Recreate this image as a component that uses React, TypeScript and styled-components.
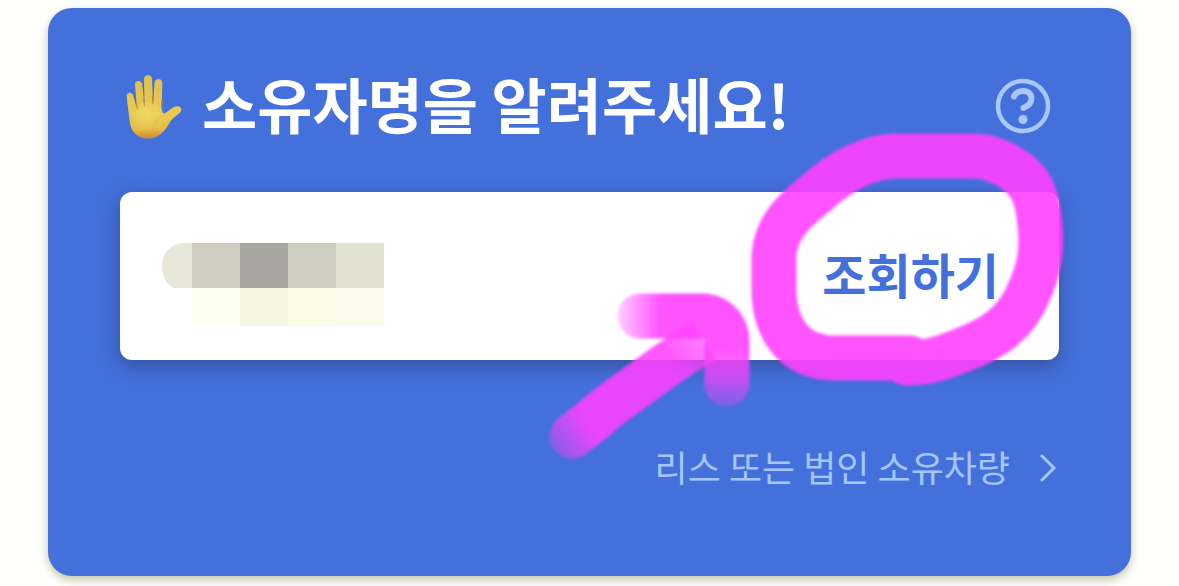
import React from "react";
import styled, { createGlobalStyle } from "styled-components";

const GlobalStyle = createGlobalStyle`
  *, *::before, *::after { box-sizing: border-box; }
  body {
    margin: 0;
    background: #fffffe;
    font-family: "Noto Sans CJK KR", "Noto Sans", sans-serif;
  }
`;

const Page = styled.main`
  padding: 8px 48px 10px;
  overflow: hidden;
`;

const Card = styled.form`
  position: relative;
  display: flex;
  flex-direction: column;
  padding: 60px 72px 82px;
  border-radius: 24px;
  background: #4470dc;
  box-shadow: 0 4px 10px rgba(110, 110, 40, 0.4);
`;

const Header = styled.header`
  display: flex;
  align-items: center;
  gap: 18px;
  height: 76px;
  margin-bottom: 48px;
`;

const Title = styled.h1`
  flex: 1;
  margin: 0;
  padding-bottom: 6px;
  color: #fff;
  font-size: 60px;
  font-weight: 700;
  line-height: 72px;
  white-space: nowrap;
`;

const HelpButton = styled.button`
  display: flex;
  margin-right: 8px;
  padding: 0;
  border: 0;
  background: none;
  cursor: pointer;
`;

const Field = styled.div`
  display: flex;
  align-items: center;
  height: 168px;
  padding: 0 60px 0 42px;
  border-radius: 12px;
  background: #fff;
  box-shadow: 0 6px 18px rgba(40, 50, 90, 0.5);
`;

const NameMask = styled.svg`
  flex: none;
  margin-top: 18px;
`;

const OwnerInput = styled.input`
  flex: 1;
  min-width: 0;
  height: 100%;
  border: 0;
  outline: 0;
  background: transparent;
  color: #333;
  font: inherit;
  font-size: 48px;
`;

const SearchButton = styled.button`
  padding: 0 0 6px;
  border: 0;
  background: none;
  color: #4470dc;
  font-family: inherit;
  font-size: 48px;
  font-weight: 700;
  line-height: 72px;
  white-space: nowrap;
  cursor: pointer;
`;

const LeaseLink = styled.a`
  display: flex;
  align-items: center;
  align-self: flex-end;
  gap: 28px;
  margin: 78px 1px 0 0;
  color: #a5c5fb;
  font-size: 36px;
  font-weight: 400;
  line-height: 56px;
  text-decoration: none;
  white-space: nowrap;
`;

const Chevron = styled.svg`
  flex: none;
  margin-top: 4px;
`;

const Marker = styled.svg`
  position: absolute;
  top: 112px;
  right: 51px;
  pointer-events: none;
`;

function Hand() {
  return (
    <svg width="64" height="72" viewBox="0 0 64 72" aria-hidden="true">
      <defs>
        <linearGradient id="skin" x1="0" y1="0" x2="0" y2="1">
          <stop offset="0" stopColor="#e0be4c" />
          <stop offset="0.6" stopColor="#e8ca52" />
          <stop offset="0.85" stopColor="#e7bd48" />
          <stop offset="1" stopColor="#cc8733" />
        </linearGradient>
        <radialGradient id="palm" cx="0.5" cy="0.4" r="0.5">
          <stop offset="0" stopColor="#efdb68" stopOpacity="0.8" />
          <stop offset="1" stopColor="#efdb68" stopOpacity="0" />
        </radialGradient>
      </defs>
      <path
        fill="url(#skin)"
        d="M6.700 27C6 21.500 13 21.500 13.500 26.500L17 38.500L15 15C14.700 9.500 22 9.500 22.300 15L24.500 35L24 9C24 3.500 32 3.500 32 9L33 34L34.500 13C34.700 7.500 42.300 7.500 42.300 13L41.700 38C41.800 43 43 44.500 46 42.500L53 37.500C58 34.500 63.500 38 60.500 42C58 45 54 47 51.500 50C46 58 42 68 29 68.500C15 69 10.500 59 9.500 50Z"
      />
      <path
        fill="none"
        stroke="#b98838"
        strokeWidth="1.200"
        strokeLinecap="round"
        d="M16 33L17.500 39M23.700 29L24.600 36M32.500 26L33 34M42 30L41.700 38"
      />
      <ellipse cx="28" cy="48" rx="18" ry="16" fill="url(#palm)" />
      <path fill="none" stroke="#d39d3c" strokeWidth="1" opacity="0.35" d="M33 60C34 52 38 47 44 46" />
    </svg>
  );
}

function HelpIcon() {
  return (
    <svg width="56" height="56" viewBox="0 0 56 56" fill="none" stroke="#a9c7f5" aria-hidden="true">
      <circle cx="28" cy="28" r="25" strokeWidth="4.500" />
      <path d="M19 18.500C21 14 24 13 28 13C33.500 13 36.500 16.500 36.500 20.500C36.500 25.500 33 28 28.500 30" strokeWidth="6" strokeLinecap="round" />
      <circle cx="28" cy="41.500" r="4.500" fill="#a9c7f5" stroke="none" />
    </svg>
  );
}

function MaskedName() {
  return (
    <NameMask width="222" height="84" viewBox="0 0 222 84" shapeRendering="crispEdges" aria-hidden="true">
      <path fill="#e8e8da" shapeRendering="auto" d="M30 0H24C8 0 0 10 0 24C0 34 5 42 12 45H30Z" />
      <path fill="#cfccc0" d="M30 0h48v45h-48z" />
      <path fill="#a8a79f" d="M78 0h48v45h-48z" />
      <path fill="#cdcdc0" d="M126 0h48v45h-48z" />
      <path fill="#e1e2d2" d="M174 0h48v45h-48z" />
      <path fill="#fffff4" d="M30 45h48v38h-48z" />
      <path fill="#f4f6e3" d="M78 45h48v38h-48z" />
      <path fill="#fafce8" d="M126 45h48v38h-48z" />
      <path fill="#fbfcee" d="M174 45h48v38h-48z" />
    </NameMask>
  );
}

function Highlight() {
  return (
    <Marker width="540" height="360" viewBox="540 120 540 360" fill="none" aria-hidden="true">
      <defs>
        <filter id="soft" filterUnits="userSpaceOnUse" x="530" y="110" width="560" height="380">
          <feGaussianBlur stdDeviation="1.700" />
        </filter>
        <linearGradient id="tail" gradientUnits="userSpaceOnUse" x1="550" y1="450" x2="715" y2="337">
          <stop offset="0" stopColor="#ff40ff" stopOpacity="0.350" />
          <stop offset="0.220" stopColor="#ff40ff" />
          <stop offset="0.750" stopColor="#ff40ff" />
          <stop offset="1" stopColor="#ff40ff" stopOpacity="0.700" />
        </linearGradient>
        <linearGradient id="fadeLeft" gradientUnits="userSpaceOnUse" x1="616" y1="0" x2="660" y2="0">
          <stop offset="0" stopColor="#fff" stopOpacity="0.250" />
          <stop offset="1" stopColor="#fff" />
        </linearGradient>
        <linearGradient id="fadeDown" gradientUnits="userSpaceOnUse" x1="0" y1="350" x2="0" y2="410">
          <stop offset="0" stopColor="#fff" />
          <stop offset="0.500" stopColor="#fff" stopOpacity="0.750" />
          <stop offset="1" stopColor="#fff" stopOpacity="0.250" />
        </linearGradient>
        <mask id="headFade" maskUnits="userSpaceOnUse" x="600" y="280" width="170" height="140">
          <path fill="url(#fadeLeft)" d="M600 280H690V420H600Z" />
          <path fill="url(#fadeDown)" d="M690 280H770V420H690Z" />
        </mask>
      </defs>
      <g filter="url(#soft)" strokeWidth="45" strokeLinecap="round" strokeLinejoin="round">
        <path
          stroke="#ff40ff"
          opacity="0.900"
          d="M906 363C930 363 944 357 960 351C995 338 1016 323 1029 292C1039 270 1043 250 1040 225C1037 192 1030 178 1006 165C990 157 982 156 970 156H895C862 157 835 176 814 195C790 214 776 230 774 255V295C776 325 790 350 818 356C824 358 830 358 840 358H910"
        />
        <path stroke="url(#tail)" opacity="0.880" d="M572 436C595 420 608 405 632 390C652 375 674 358 704 341" strokeLinecap="butt" />
        <path fill="url(#tail)" stroke="none" opacity="0.880" d="M585 454.500A22.500 22.500 0 1 1 559.200 417.600Z" />
        <g mask="url(#headFade)">
          <path stroke="#ff40ff" opacity="0.900" d="M640 316H705C718 318 727 328 727 342V384" />
        </g>
      </g>
    </Marker>
  );
}

export default function App() {
  return (
    <>
      <GlobalStyle />
      <Page>
        <Card onSubmit={(event: React.FormEvent) => event.preventDefault()}>
          <Header>
            <Hand />
            <Title>소유자명을 알려주세요!</Title>
            <HelpButton type="button" aria-label="도움말">
              <HelpIcon />
            </HelpButton>
          </Header>
          <Field>
            <MaskedName />
            <OwnerInput type="text" aria-label="소유자명" />
            <SearchButton type="submit">조회하기</SearchButton>
          </Field>
          <LeaseLink href="#lease">
            리스 또는 법인 소유차량
            <Chevron width="20" height="32" viewBox="0 0 20 32" fill="none" stroke="#a5c5fb" strokeWidth="3" aria-hidden="true">
              <path d="M3 3L16 16L3 29" />
            </Chevron>
          </LeaseLink>
          <Highlight />
        </Card>
      </Page>
    </>
  );
}
